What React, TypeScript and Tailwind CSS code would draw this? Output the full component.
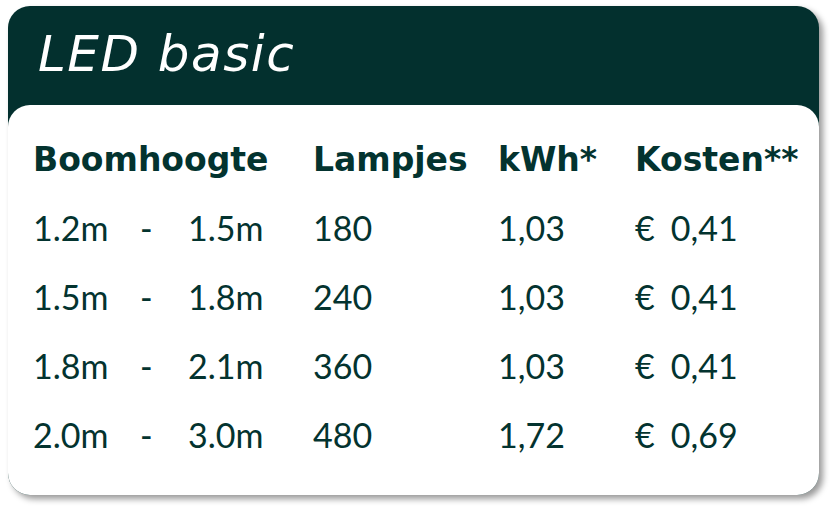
import React from 'react';

const rows = [
  { from: '1.2m', to: '1.5m', lamps: '180', kwh: '1,03', cost: '0,41' },
  { from: '1.5m', to: '1.8m', lamps: '240', kwh: '1,03', cost: '0,41' },
  { from: '1.8m', to: '2.1m', lamps: '360', kwh: '1,03', cost: '0,41' },
  { from: '2.0m', to: '3.0m', lamps: '480', kwh: '1,72', cost: '0,69' },
];

const grid = 'grid grid-cols-[107px_48px_125px_185px_137px_1fr]';

export default function App() {
  return (
    <div className="w-[835px] h-[513px] bg-white pt-[6px] pl-[8px]">
      {/* card */}
      <div className="w-[811px] h-[489px] rounded-[22px] bg-[#03302e] flex flex-col shadow-[4px_4px_6px_rgba(0,0,0,0.4)]">
        <div className="h-[99px] shrink-0 pl-[30px] pt-[23px]">
          <h1 className="text-white italic text-[50px] leading-[50px] tracking-[1.5px] font-['DejaVu_Sans',sans-serif]">
            LED basic
          </h1>
        </div>

        {/* table */}
        <div className="flex-1 bg-white rounded-[22px] pl-[25px] pt-[22px] text-[#03332f]">
          <div className={`${grid} font-['DejaVu_Sans',sans-serif] font-bold text-[33px] leading-[66px]`}>
            <div className="col-span-3">Boomhoogte</div>
            <div>Lampjes</div>
            <div>kWh*</div>
            <div className="whitespace-nowrap">Kosten**</div>
          </div>
          {rows.map((row) => (
            <div
              key={row.from}
              className={`${grid} font-['Lato',sans-serif] text-[34px] leading-[69px]`}
            >
              <div>{row.from}</div>
              <div>-</div>
              <div>{row.to}</div>
              <div>{row.lamps}</div>
              <div>{row.kwh}</div>
              <div className="whitespace-nowrap">
                <span className="mr-[16px]">€</span>
                {row.cost}
              </div>
            </div>
          ))}
        </div>
      </div>
    </div>
  );
}
